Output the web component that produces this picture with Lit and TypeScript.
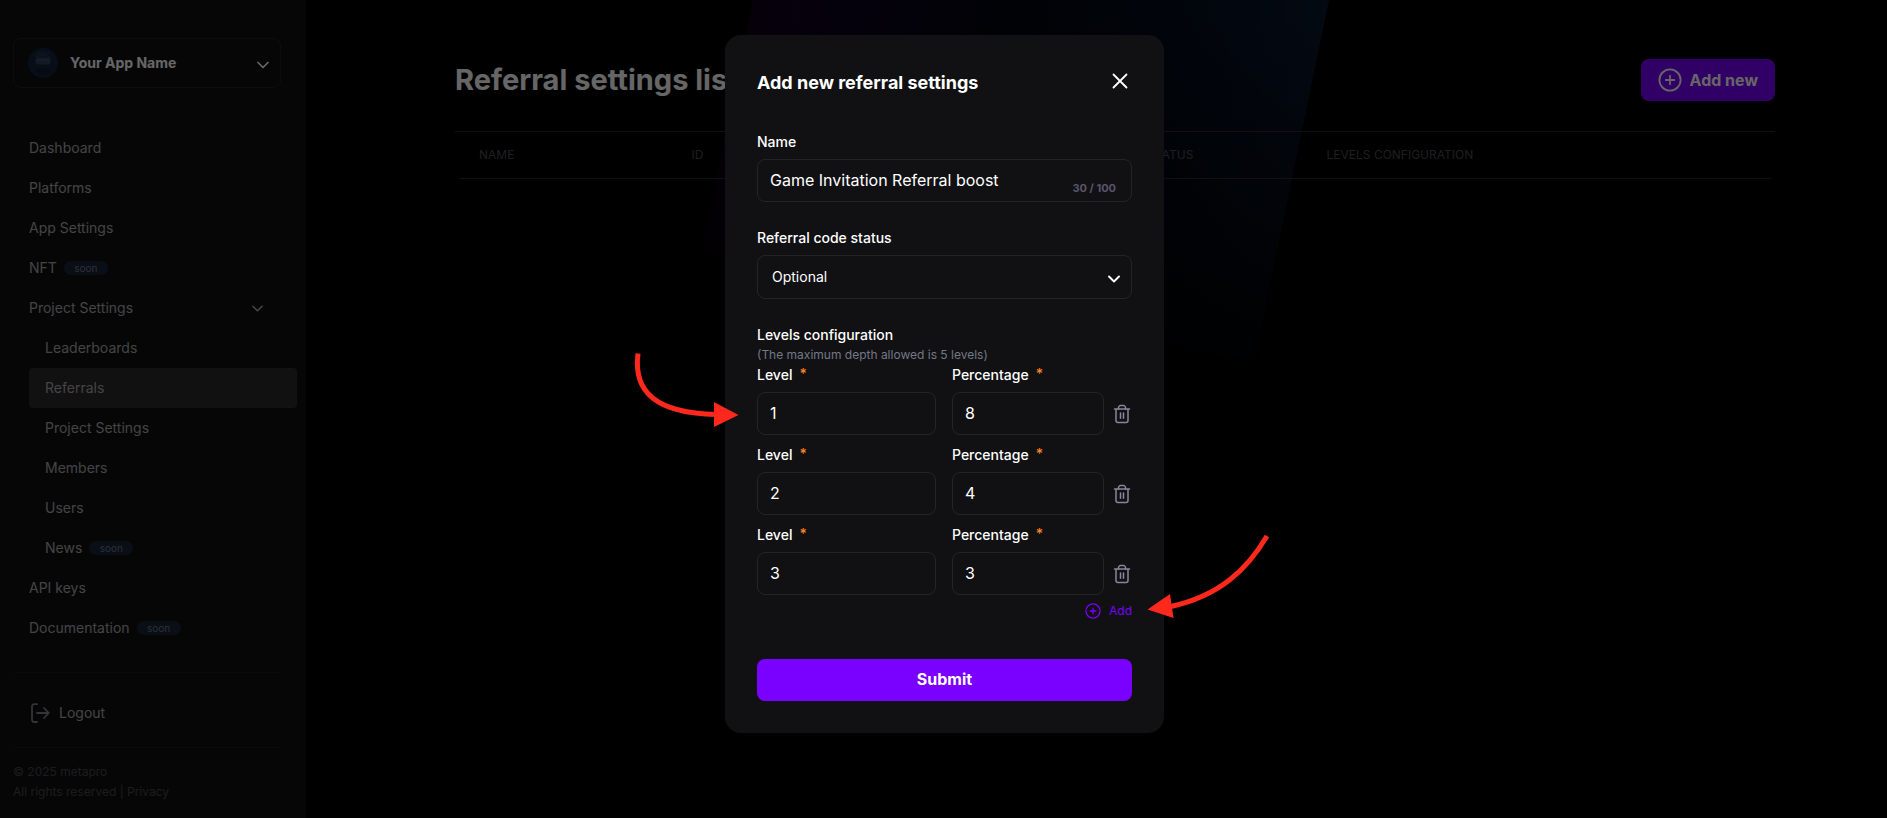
import { LitElement, html, css, nothing } from "lit";
import { customElement, property } from "lit/decorators.js";

const chevron = (size: number, stroke = 2) => html`
  <svg class="chevron" width=${size} height=${size} viewBox="0 0 12 12" fill="none" stroke="currentColor"
    stroke-width=${stroke} stroke-linecap="round" stroke-linejoin="round" aria-hidden="true">
    <path d="M1 3.5 L6 8.5 L11 3.5" />
  </svg>`;

const plusCircle = (size: number, stroke: number) => html`
  <svg width=${size} height=${size} viewBox="0 0 24 24" fill="none" stroke="currentColor"
    stroke-width=${stroke} stroke-linecap="round" aria-hidden="true">
    <circle cx="12" cy="12" r="10.6" />
    <path d="M12 7.7V16.3M7.7 12H16.3" />
  </svg>`;

const base = css`
  :host, * { box-sizing: border-box; }
  button, input, select { font: inherit; color: inherit; }
  button { border: 0; background: none; padding: 0; cursor: pointer; }
  a { color: inherit; text-decoration: none; }
  ul { list-style: none; margin: 0; padding: 0; }
  h1, h2, p { margin: 0; }
  svg { display: block; flex: none; }
`;

interface NavItem {
  label: string;
  soon?: boolean;
  active?: boolean;
  children?: NavItem[];
}

const NAV: NavItem[] = [
  { label: "Dashboard" },
  { label: "Platforms" },
  { label: "App Settings" },
  { label: "NFT", soon: true },
  {
    label: "Project Settings",
    children: [
      { label: "Leaderboards" },
      { label: "Referrals", active: true },
      { label: "Project Settings" },
      { label: "Members" },
      { label: "Users" },
      { label: "News", soon: true },
    ],
  },
  { label: "API keys" },
  { label: "Documentation", soon: true },
];

@customElement("side-bar")
class SideBar extends LitElement {
  static styles = [base, css`
    :host {
      display: flex;
      flex-direction: column;
      flex: none;
      width: 306px;
      padding: 38px 25px 16px 13px;
      background: #111113;
      color: #aaaaaa;
      font-size: 14px;
      line-height: 20px;
    }
    .app {
      display: flex;
      align-items: center;
      gap: 12px;
      height: 50px;
      padding: 0 11px 0 14px;
      border: 1px solid #212124;
      border-radius: 8px;
      color: #fff;
      font-weight: 700;
      text-align: left;
    }
    .app-name { flex: 1; }
    .app .chevron { margin-top: 4px; }
    nav { margin-top: 40px; }
    .link {
      display: flex;
      align-items: center;
      gap: 7px;
      width: 100%;
      height: 40px;
      padding: 0 18px 0 16px;
      border-radius: 4px;
    }
    .link .chevron { margin-left: auto; }
    .sub { margin: 0 -16px 0 16px; }
    .active { background: #2b2b2f; }
    .soon {
      width: 44px;
      border-radius: 8px;
      background: #18243a;
      color: #77777f;
      font-size: 10px;
      line-height: 14px;
      text-align: center;
    }
    .logout {
      display: flex;
      align-items: center;
      gap: 8px;
      width: 100%;
      margin-top: 24px;
      padding: 29px 16px 23px;
      border: solid #1a1a1c;
      border-width: 1px 0;
    }
    .logout svg { color: #80808c; }
    .legal {
      margin-top: 14px;
      color: #46464c;
      font-size: 12px;
      line-height: 20px;
    }
  `];

  private item(i: NavItem): unknown {
    const body = html`${i.label}${i.soon ? html`<span class="soon">soon</span>` : nothing}`;
    return html`<li>
      ${i.children
        ? html`<button class="link" aria-expanded="true">${body}${chevron(11, 1.7)}</button>
            <ul class="sub">${i.children.map((c) => this.item(c))}</ul>`
        : html`<a class="link ${i.active ? "active" : ""}" href="#">${body}</a>`}
    </li>`;
  }

  render() {
    return html`
      <button class="app">
        <svg width="30" height="30" viewBox="0 0 30 30" aria-hidden="true">
          <circle cx="15" cy="15" r="15" fill="#16233b" />
          <path d="M7 19L10 22L12 19L15 23L18 19L20 22L23 19L21 25Q15 29 9 25Z" fill="#101a2c" />
          <rect x="7.500" y="9.500" width="15" height="7" rx="3" fill="#33435e" />
          <path d="M9.500 12.500Q15 10.500 20.500 12.500" stroke="#41536f" stroke-width="1" fill="none" />
          <path d="M8 7L12 4M11.500 7L15 3.500M15 7L18 4M18 7L21 5M7.500 9Q15 6.500 22.500 9"
            stroke="#2d3d58" stroke-width="1.200" fill="none" />
        </svg>
        <span class="app-name">Your App Name</span>
        ${chevron(12, 1.7)}
      </button>
      <nav aria-label="Main"><ul>${NAV.map((i) => this.item(i))}</ul></nav>
      <button class="logout">
        <svg width="22" height="22" viewBox="0 0 22 22" fill="none" stroke="currentColor" stroke-width="1.8"
          stroke-linecap="round" stroke-linejoin="round" aria-hidden="true">
          <path d="M8 2.200H5.200A2.200 2.200 0 0 0 3 4.400V17.800A2.200 2.200 0 0 0 5.200 20H8" />
          <path d="M8 11H19.500M15 6L19.800 11L15 16" />
        </svg>
        Logout
      </button>
      <p class="legal">© 2025 metapro<br />All rights reserved | <a href="#">Privacy</a></p>
    `;
  }
}

@customElement("referral-list")
class ReferralList extends LitElement {
  static styles = [base, css`
    :host {
      position: relative;
      display: block;
      flex: 1;
      min-width: 0;
      padding: 59px 112px 0 149px;
      overflow: hidden;
    }
    .glow { position: absolute; top: 0; left: 390px; }
    .content { position: relative; }
    header {
      display: flex;
      align-items: center;
      justify-content: space-between;
      margin-bottom: 30px;
    }
    h1 { color: #fff; font-size: 29px; line-height: 42px; font-weight: 700; }
    .add {
      display: flex;
      align-items: center;
      gap: 8px;
      height: 42px;
      padding: 0 17px;
      border-radius: 8px;
      background: #7a00ff;
      color: #fff;
      font-size: 16px;
      font-weight: 700;
    }
    .table { border-top: 1px solid #29292c; padding: 0 4px; }
    table { width: 100%; table-layout: fixed; border-collapse: collapse; }
    th {
      height: 46px;
      padding: 0 20px;
      border-bottom: 1px solid #29292c;
      color: #4d4d53;
      font-size: 12px;
      font-weight: 400;
      text-align: left;
      text-transform: uppercase;
      white-space: nowrap;
    }
    .c-name { width: 16.2%; }
    .c-id { width: 27.1%; }
    .c-status { width: 21.3%; }
  `];

  render() {
    return html`
      <svg class="glow" width="640" height="370" viewBox="0 0 640 370" aria-hidden="true">
        <defs>
          <linearGradient id="hue" x1="0" y1="0" x2="1" y2="0">
            <stop offset="0" stop-color="#14001a" />
            <stop offset="0.2" stop-color="#0e0322" />
            <stop offset="0.5" stop-color="#020610" />
            <stop offset="0.75" stop-color="#030d1c" />
            <stop offset="1" stop-color="#0a1830" />
          </linearGradient>
          <linearGradient id="fade" x1="0.55" y1="0" x2="0.4" y2="1">
            <stop offset="0" stop-color="#000" stop-opacity="0" />
            <stop offset="1" stop-color="#000" stop-opacity="0.92" />
          </linearGradient>
        </defs>
        <path d="M57 0H633L558 361L6 250Z" fill="url(#hue)" />
        <path d="M57 0H633L558 361L6 250Z" fill="url(#fade)" />
      </svg>
      <div class="content">
        <header>
          <h1>Referral settings list</h1>
          <button class="add">${plusCircle(24, 1.8)} Add new</button>
        </header>
        <div class="table">
          <table>
            <thead>
              <tr>
                <th class="c-name">Name</th>
                <th class="c-id">ID</th>
                <th class="c-status">Referral code status</th>
                <th>Levels configuration</th>
              </tr>
            </thead>
          </table>
        </div>
      </div>
    `;
  }
}

@customElement("level-row")
class LevelRow extends LitElement {
  @property({ type: Number }) level = 1;
  @property({ type: Number }) percentage = 0;

  static styles = [base, css`
    :host { display: flex; align-items: flex-end; }
    .field { flex: 179 1 0; min-width: 0; }
    .field.narrow { flex-grow: 152; margin-left: 16px; }
    label { display: flex; gap: 7px; margin-bottom: 7px; font-size: 14px; line-height: 20px; font-weight: 500; }
    .req { color: #ff8126; font-size: 14px; line-height: 18px; }
    input {
      display: block;
      width: 100%;
      height: 43px;
      padding: 0 12px 2px;
      border: 1px solid #242427;
      border-radius: 8px;
      background: none;
      font-size: 16px;
      outline: none;
    }
    .delete {
      display: flex;
      justify-content: flex-end;
      align-items: center;
      width: 28px;
      height: 43px;
      color: #8b859c;
    }
  `];

  render() {
    return html`
      <div class="field">
        <label for="level">Level <span class="req">*</span></label>
        <input id="level" type="text" inputmode="numeric" required .value=${String(this.level)} />
      </div>
      <div class="field narrow">
        <label for="percentage">Percentage <span class="req">*</span></label>
        <input id="percentage" type="text" inputmode="numeric" required .value=${String(this.percentage)} />
      </div>
      <button class="delete" aria-label="Delete level">
        <svg width="20" height="20" viewBox="0 0 20 20" fill="none" stroke="currentColor" stroke-width="1.5"
          stroke-linecap="round" stroke-linejoin="round" aria-hidden="true">
          <path d="M2.500 5H17.500M4 5V16.500A2 2 0 0 0 6 18.500H14A2 2 0 0 0 16 16.500V5" />
          <path d="M6.500 5V3.600A2 2 0 0 1 8.500 1.600H11.500A2 2 0 0 1 13.500 3.600V5" />
          <path d="M8.500 9V14.200M11.500 9V14.200" />
        </svg>
      </button>
    `;
  }
}

@customElement("referral-dialog")
class ReferralDialog extends LitElement {
  static styles = [base, css`
    :host {
      position: relative;
      display: block;
      width: 439px;
      max-width: 100%;
      padding: 32px;
      border-radius: 16px;
      background: #111113;
      color: #fff;
      font-size: 14px;
      line-height: 20px;
    }
    header {
      display: flex;
      justify-content: space-between;
      margin-bottom: 33px;
      padding-right: 4px;
    }
    h2 { font-size: 18px; line-height: 32px; font-weight: 700; }
    .close { height: 28px; }
    .group { margin-bottom: 26px; }
    .label { display: block; font-weight: 500; margin-bottom: 7px; }
    .box { position: relative; }
    input, select {
      display: block;
      width: 100%;
      border: 1px solid #242427;
      border-radius: 8px;
      background: none;
      outline: none;
    }
    input { height: 43px; padding: 0 80px 2px 12px; font-size: 16px; }
    select { height: 44px; padding: 0 36px 0 14px; appearance: none; }
    option { background: #111113; }
    .counter {
      position: absolute;
      right: 16px;
      bottom: 6px;
      color: #59546d;
      font-size: 11px;
      line-height: 16px;
      font-weight: 700;
    }
    .box .chevron { position: absolute; right: 12px; top: 18px; pointer-events: none; }
    .levels { border: 0; margin: 0; padding: 0; min-width: 0; }
    legend { padding: 0; font-weight: 500; }
    .hint { color: #747887; font-size: 12px; }
    .rows { display: grid; gap: 10px; }
    .more {
      display: flex;
      align-items: center;
      gap: 8px;
      height: 20px;
      margin: 6px 0 38px auto;
      color: #7a00ff;
      font-size: 12px;
    }
    .submit {
      display: block;
      width: 100%;
      height: 42px;
      padding-bottom: 2px;
      border-radius: 8px;
      background: #7a00ff;
      font-size: 16px;
      font-weight: 700;
    }
    .arrows {
      position: absolute;
      top: 0;
      left: 0;
      overflow: visible;
      pointer-events: none;
    }
  `];

  render() {
    const levels = [[1, 8], [2, 4], [3, 3]];
    return html`
      <header>
        <h2>Add new referral settings</h2>
        <button class="close" aria-label="Close">
          <svg width="16" height="16" viewBox="0 0 16 16" stroke="currentColor" stroke-width="1.8"
            stroke-linecap="round" aria-hidden="true">
            <path d="M1.500 1.500L14.500 14.500M14.500 1.500L1.500 14.500" />
          </svg>
        </button>
      </header>
      <div class="group">
        <label class="label" for="name">Name</label>
        <div class="box">
          <input id="name" type="text" maxlength="100" value="Game Invitation Referral boost" />
          <span class="counter">30 / 100</span>
        </div>
      </div>
      <div class="group">
        <label class="label" for="status">Referral code status</label>
        <div class="box">
          <select id="status">
            <option>Optional</option>
            <option>Required</option>
          </select>
          ${chevron(12, 1.9)}
        </div>
      </div>
      <fieldset class="levels">
        <legend>Levels configuration</legend>
        <p class="hint">(The maximum depth allowed is 5 levels)</p>
        <div class="rows">
          ${levels.map(([l, p]) => html`<level-row .level=${l} .percentage=${p}></level-row>`)}
        </div>
        <button class="more">${plusCircle(16, 1.9)} Add</button>
      </fieldset>
      <button class="submit">Submit</button>
      <svg class="arrows" width="1" height="1" aria-hidden="true">
        <g fill="none" stroke="#ff281c" stroke-width="5">
          <path d="M-87 318.500C-92 358-68 378-9 379.500" />
          <path d="M542 501C522 535 494 561 446 571.500" />
        </g>
        <g fill="#ff281c">
          <path d="M-11 367L13.500 380L-11 392Z" />
          <path d="M422.500 574.500L445 559L448.500 583Z" />
        </g>
      </svg>
    `;
  }
}

@customElement("app-root")
class AppRoot extends LitElement {
  static styles = css`
    :host {
      position: relative;
      display: flex;
      min-height: 100vh;
      background: #000;
      font-family: Inter, "Liberation Sans", sans-serif;
    }
    .overlay {
      position: absolute;
      inset: 0;
      display: flex;
      align-items: flex-start;
      justify-content: center;
      padding: 35px 0 35px 2px;
      background: rgba(0, 0, 0, 0.6);
    }
  `;

  render() {
    return html`
      <side-bar></side-bar>
      <referral-list></referral-list>
      <div class="overlay">
        <referral-dialog role="dialog" aria-modal="true" aria-label="Add new referral settings"></referral-dialog>
      </div>
    `;
  }
}
